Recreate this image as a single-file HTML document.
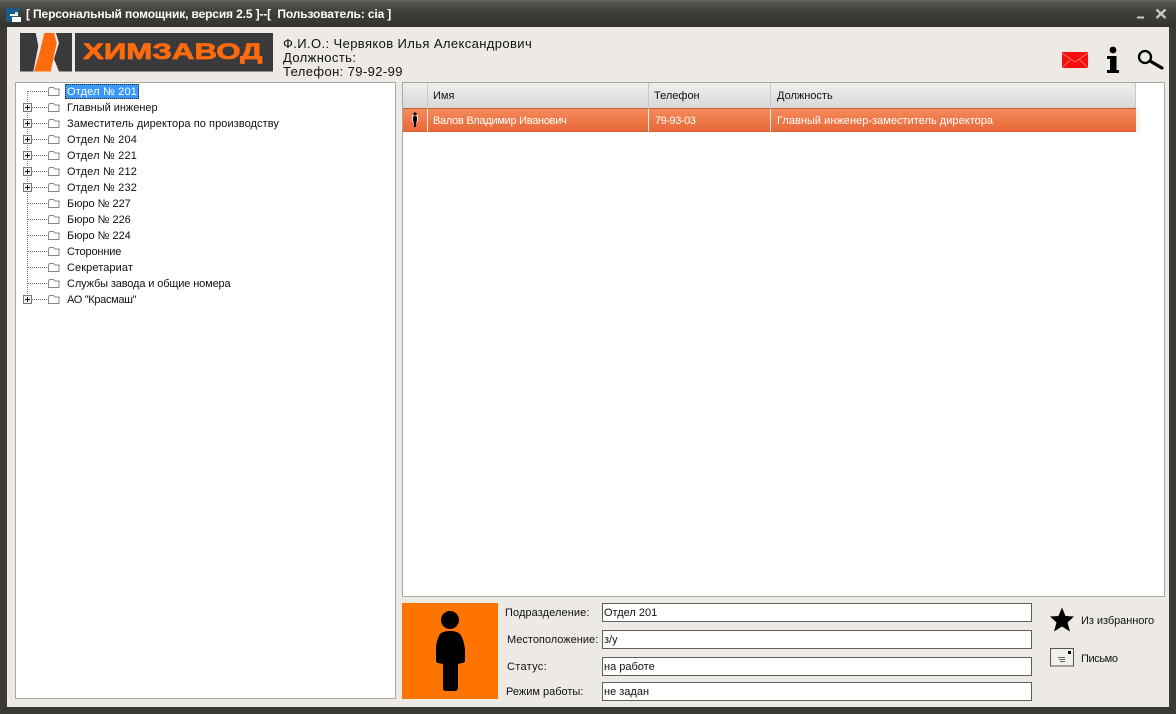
<!DOCTYPE html>
<html><head><meta charset="utf-8"><style>
*{box-sizing:border-box}
html,body{margin:0;padding:0;width:1176px;height:714px;overflow:hidden;background:#3b3a36}
body{position:relative;font-family:"Liberation Sans","DejaVu Sans",sans-serif;font-size:11px;color:#111}
.a{position:absolute}
.t{position:absolute;white-space:nowrap;line-height:14px;font-size:11px;letter-spacing:.18px}
#title{left:0;top:0;width:1176px;height:27px;background:linear-gradient(#6b6a65 0,#55544f 2px,#403f3a 12px,#34332f 27px)}
#main{left:7px;top:27px;width:1162px;height:680px;background:#edeae6}
.box{position:absolute;background:#fff;border:1px solid #a9a8a3}
.in{position:absolute;left:602px;width:430px;background:#fff;border:1px solid #5f5f5a;font-size:11px;line-height:18px;padding-left:1px;letter-spacing:0;white-space:nowrap}
.hd{position:absolute;top:83px;height:25px;background:linear-gradient(#f0efed,#d9d8d6);border-right:1px solid #c8c7c4;line-height:25px;padding-top:1px;padding-left:5px;letter-spacing:0;white-space:nowrap;overflow:hidden}
.rw{position:absolute;top:108px;height:24px;background:linear-gradient(#f58a5a,#e8693a);border-right:1px solid #f4e9e2;border-top:1px solid #b9603a;color:#fff;line-height:24px;padding-left:5px;white-space:nowrap;border-bottom:1px solid #d9643a}
.lb{position:absolute;white-space:nowrap;font-size:11px;line-height:14px}
</style></head><body>
<div id="title" class="a"></div>
<svg class="a" style="left:6px;top:8px" width="16" height="16" viewBox="0 0 16 16"><rect width="13" height="14" fill="#1d5c86"/><path d="M4 6h8v2H4zM6 9h9v5H6z" fill="#fff"/><rect x="9" y="4" width="3" height="3" fill="#cfe0ea"/></svg>
<div class="t" style="left:26px;top:7px;color:#fff;font-weight:bold;font-size:12px;letter-spacing:-.14px;line-height:15px;white-space:pre">[ Персональный помощник, версия 2.5 ]--[  Пользователь: cia ]</div>
<svg class="a" style="left:1136px;top:8px" width="32" height="14" viewBox="0 0 32 14"><rect x="1" y="8.5" width="7" height="2" fill="#c9c8c4"/><path d="M20.5 1.5l9 8.5M29.5 1.5l-9 8.5" stroke="#c9c8c4" stroke-width="2.4" fill="none"/></svg>
<div id="main" class="a"></div>

<!-- logo -->
<svg class="a" style="left:20px;top:33px" width="253" height="39" viewBox="0 0 253 39">
<rect x="55" width="198" height="38.5" fill="#3a3a3c"/>
<path d="M0 0H15.7L18.3 13L13.3 38.5H0Z" fill="#3a3a3c"/>
<path d="M24.3 0H34L36.7 10L30.7 38.5H14L20 18Z" fill="#ff6a0c"/>
<path d="M36 0H52V38.5H39L34 26L39 10Z" fill="#3a3a3c"/>
</svg>
<div class="a" style="left:83px;top:39px;width:186px;height:26px;color:#ff6a0c;font:bold 22px/26px 'Liberation Sans',sans-serif;white-space:nowrap;overflow:hidden"><span style="display:inline-block;transform:scaleX(1.42);transform-origin:0 50%;-webkit-text-stroke:.7px #ff6a0c">ХИМЗАВОД</span></div>

<div class="a" style="left:283px;top:37px;font-size:13px;line-height:14px;letter-spacing:.39px;color:#111;white-space:nowrap">Ф.И.О.: Червяков Илья Александрович<br>Должность:<br>Телефон: 79-92-99</div>

<!-- top icons -->
<svg class="a" style="left:1061px;top:51px" width="28" height="18" viewBox="0 0 28 18"><rect x="1" y="1" width="26" height="16" fill="#f70f0f"/><path d="M1 2l13 9 13-9M1 17l9-9M27 17l-9-9" stroke="#ff8080" stroke-width=".8" fill="none"/></svg>
<svg class="a" style="left:1105px;top:46px" width="16" height="28" viewBox="0 0 16 28"><circle cx="8" cy="4" r="3.4" fill="#000"/><path d="M2 10H11.5V24H14V27H2V24H5V13H2Z" fill="#000"/></svg>
<svg class="a" style="left:1137px;top:49px" width="28" height="24" viewBox="0 0 28 24"><circle cx="8" cy="8" r="6" fill="none" stroke="#000" stroke-width="2.3"/><path d="M13 12L25 19" stroke="#000" stroke-width="3.2" stroke-linecap="round"/></svg>

<!-- tree -->
<div class="box" style="left:15px;top:82px;width:381px;height:617px"></div>
<svg class="a" style="left:16px;top:83px" width="50" height="224" viewBox="0 0 50 224">
<g fill="none" stroke="#6c6c6c" stroke-width="1" stroke-dasharray="1 1">
<path d="M11.5 8V216.5"/><path d="M12 8.5H31M12 24.5H31M12 40.5H31M12 56.5H31M12 72.5H31M12 88.5H31M12 104.5H31M12 120.5H31M12 136.5H31M12 152.5H31M12 168.5H31M12 184.5H31M12 200.5H31M12 216.5H31"/>
</g>
<g fill="#f2f1ee" stroke="#777">
<rect x="7.5" y="20.5" width="8" height="8"/><rect x="7.5" y="36.5" width="8" height="8"/><rect x="7.5" y="52.5" width="8" height="8"/><rect x="7.5" y="68.5" width="8" height="8"/><rect x="7.5" y="84.5" width="8" height="8"/><rect x="7.5" y="100.5" width="8" height="8"/><rect x="7.5" y="212.5" width="8" height="8"/>
</g>
<path d="M9 24.5h5M11.5 22v5M9 40.5h5M11.5 38v5M9 56.5h5M11.5 54v5M9 72.5h5M11.5 70v5M9 88.5h5M11.5 86v5M9 104.5h5M11.5 102v5M9 216.5h5M11.5 214v5" stroke="#111" fill="none"/>
<g fill="#fff" stroke="#88887f">
<path d="M32.5 12.5V6l1-1.5h4l1 1.5h4.5v6.5z"/><path d="M32.5 28.5V22l1-1.5h4l1 1.5h4.5v6.5z"/><path d="M32.5 44.5V38l1-1.5h4l1 1.5h4.5v6.5z"/><path d="M32.5 60.5V54l1-1.5h4l1 1.5h4.5v6.5z"/><path d="M32.5 76.5V70l1-1.5h4l1 1.5h4.5v6.5z"/><path d="M32.5 92.5V86l1-1.5h4l1 1.5h4.5v6.5z"/><path d="M32.5 108.5V102l1-1.5h4l1 1.5h4.5v6.5z"/><path d="M32.5 124.5V118l1-1.5h4l1 1.5h4.5v6.5z"/><path d="M32.5 140.5V134l1-1.5h4l1 1.5h4.5v6.5z"/><path d="M32.5 156.5V150l1-1.5h4l1 1.5h4.5v6.5z"/><path d="M32.5 172.5V166l1-1.5h4l1 1.5h4.5v6.5z"/><path d="M32.5 188.5V182l1-1.5h4l1 1.5h4.5v6.5z"/><path d="M32.5 204.5V198l1-1.5h4l1 1.5h4.5v6.5z"/><path d="M32.5 220.5V214l1-1.5h4l1 1.5h4.5v6.5z"/>
</g>
</svg>
<div class="a" style="left:65px;top:84px;width:74px;height:15px;background:#3b99fc;outline:1px dotted #222;outline-offset:-1px"></div>
<div class="t" style="left:67px;top:85px;color:#fff">Отдел № 201</div>
<div class="t" style="left:67px;top:101px;letter-spacing:-.02px">Главный инженер</div>
<div class="t" style="left:67px;top:117px;letter-spacing:.075px">Заместитель директора по производству</div>
<div class="t" style="left:67px;top:133px">Отдел № 204</div>
<div class="t" style="left:67px;top:149px">Отдел № 221</div>
<div class="t" style="left:67px;top:165px">Отдел № 212</div>
<div class="t" style="left:67px;top:181px">Отдел № 232</div>
<div class="t" style="left:67px;top:197px;letter-spacing:-.02px">Бюро № 227</div>
<div class="t" style="left:67px;top:213px;letter-spacing:-.02px">Бюро № 226</div>
<div class="t" style="left:67px;top:229px;letter-spacing:-.02px">Бюро № 224</div>
<div class="t" style="left:67px;top:245px;letter-spacing:-.16px">Сторонние</div>
<div class="t" style="left:67px;top:261px;letter-spacing:.09px">Секретариат</div>
<div class="t" style="left:67px;top:277px;letter-spacing:-.13px">Службы завода и общие номера</div>
<div class="t" style="left:67px;top:293px;letter-spacing:-.33px">АО "Красмаш"</div>

<!-- grid -->
<div class="box" style="left:402px;top:82px;width:763px;height:515px"></div>
<div class="hd" style="left:403px;width:25px"></div>
<div class="hd" style="left:428px;width:221px">Имя</div>
<div class="hd" style="left:649px;width:122px">Телефон</div>
<div class="hd" style="left:771px;width:365px;padding-left:6px">Должность</div>
<div class="rw" style="left:403px;width:25px"></div>
<div class="rw" style="left:428px;width:221px;letter-spacing:-.28px">Валов Владимир Иванович</div>
<div class="rw" style="left:649px;width:122px;padding-left:6px;letter-spacing:-.45px">79-93-03</div>
<div class="rw" style="left:771px;width:365px;border-right:0;padding-left:6px;letter-spacing:.03px">Главный инженер-заместитель директора</div>
<svg class="a" style="left:411px;top:112px" width="8" height="16" viewBox="0 0 8 16"><rect x="1" y="3" width="6" height="7" rx="1.5" fill="#fff" opacity=".8"/><circle cx="4" cy="2" r="1.6" fill="#000"/><path d="M2 5.2Q2 4 4 4t2 1.2V9.5H5V15H3V9.5H2Z" fill="#000"/></svg>
<div class="a" style="left:1136px;top:108px;width:4px;height:25px;background:#f5f4f1"></div>

<!-- person -->
<div class="a" style="left:402px;top:603px;width:96px;height:96px;background:#ff7300"></div>
<svg class="a" style="left:402px;top:603px" width="96" height="96" viewBox="0 0 96 96"><circle cx="48" cy="17" r="9" fill="#000"/><path d="M38 31C40 29 44 28 48 28S56 29 58 31C61 35 62 40 63 46V57C63 59 62 60 60 60L56 61V85C56 87 54 88 53 88H44C42 88 41 87 41 85V61L36 60C35 60 34 59 34 57V46C34 40 36 35 38 31Z" fill="#000"/></svg>

<div class="lb" style="left:505px;top:606px;letter-spacing:.09px">Подразделение:</div>
<div class="lb" style="left:507px;top:633px;letter-spacing:0">Местоположение:</div>
<div class="lb" style="left:507px;top:660px;letter-spacing:.3px">Статус:</div>
<div class="lb" style="left:506px;top:685px;letter-spacing:0">Режим работы:</div>
<div class="in" style="top:603px;height:19px">Отдел 201</div>
<div class="in" style="top:630px;height:19px">з/у</div>
<div class="in" style="top:657px;height:19px">на работе</div>
<div class="in" style="top:682px;height:19px">не задан</div>

<svg class="a" style="left:1049px;top:607px" width="26" height="26" viewBox="0 0 26 26"><path d="M13 .5L16.5 9L25 9.5L18.5 15.5L21 24.5L13 19.5L5 24.5L7.5 15.5L1 9.5L9.5 9Z" fill="#000"/></svg>
<div class="lb" style="left:1081px;top:614px;letter-spacing:-.05px">Из избранного</div>
<svg class="a" style="left:1050px;top:648px" width="24" height="19" viewBox="0 0 24 19"><rect x=".5" y=".5" width="23" height="17.5" fill="#f2f0ec" stroke="#555"/><rect x="18" y="3" width="3" height="3" fill="#000"/><path d="M8 9.5h7M9 11.5h6M10 13.5h5" stroke="#666" fill="none"/></svg>
<div class="lb" style="left:1081px;top:652px;letter-spacing:-.4px">Письмо</div>
</body></html>
